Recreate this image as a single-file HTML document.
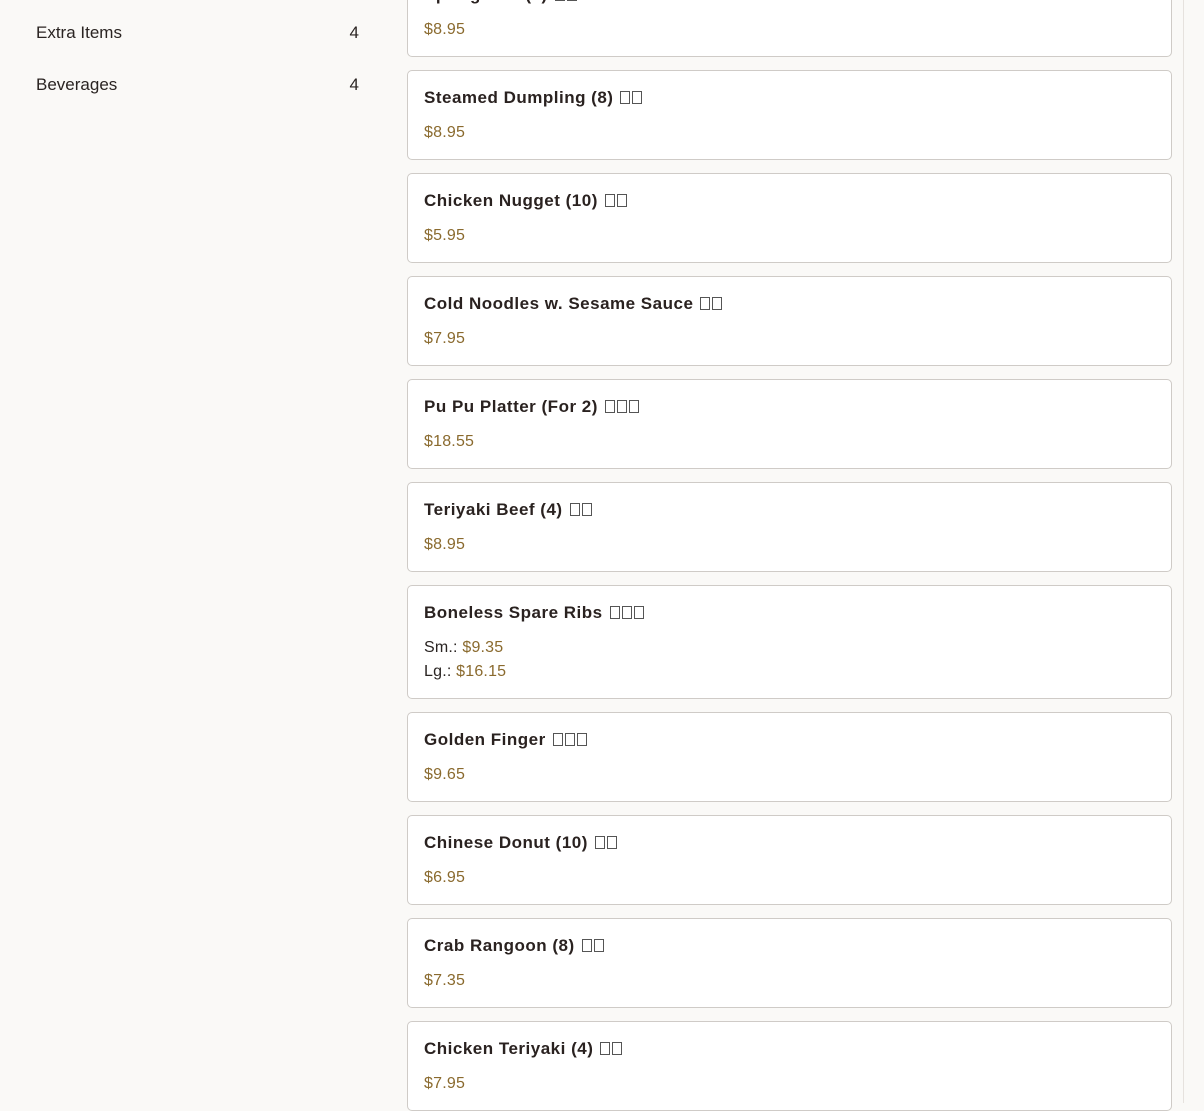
<!DOCTYPE html>
<html><head><meta charset="utf-8"><style>
body{margin:0;width:1204px;height:1103px;overflow:hidden;background:#faf9f7;font-family:"Liberation Sans",sans-serif;position:relative}
.side{position:absolute;left:36px;width:323px;font-size:17px;color:#2a2422}
.side span{float:right}
.vl{position:absolute;left:1183px;top:0;width:1px;height:1103px;background:#e6e2de}
.card{position:absolute;left:407px;width:763px;height:88px;background:#fff;border:1px solid #cfcbc7;border-radius:5px}
.t{position:absolute;left:16px;top:17px;font-size:17px;font-weight:bold;color:#2a2220;white-space:nowrap;letter-spacing:0.5px}
.p{position:absolute;left:16px;top:53px;font-size:16px;color:#8a6a2e;letter-spacing:0.2px}
.q{color:#2a2422}
.b{display:inline-block;width:10px;height:13px;border:1px solid #555;box-sizing:border-box;margin-left:2px;vertical-align:-1px}
.b:first-child{margin-left:7px}
</style></head><body>
<div class="side" style="top:23px">Extra Items<span>4</span></div>
<div class="side" style="top:75px">Beverages<span>4</span></div>
<div class="vl"></div>

<div class="card" style="top:-33px"><div class="t">Spring Roll (4)<i class="b"></i><i class="b"></i></div><div class="p">$8.95</div></div>
<div class="card" style="top:70px"><div class="t">Steamed Dumpling (8)<i class="b"></i><i class="b"></i></div><div class="p">$8.95</div></div>
<div class="card" style="top:173px"><div class="t">Chicken Nugget (10)<i class="b"></i><i class="b"></i></div><div class="p">$5.95</div></div>
<div class="card" style="top:276px"><div class="t">Cold Noodles w. Sesame Sauce<i class="b"></i><i class="b"></i></div><div class="p">$7.95</div></div>
<div class="card" style="top:379px"><div class="t">Pu Pu Platter (For 2)<i class="b"></i><i class="b"></i><i class="b"></i></div><div class="p">$18.55</div></div>
<div class="card" style="top:482px"><div class="t">Teriyaki Beef (4)<i class="b"></i><i class="b"></i></div><div class="p">$8.95</div></div>
<div class="card" style="top:585px;height:112px"><div class="t">Boneless Spare Ribs<i class="b"></i><i class="b"></i><i class="b"></i></div><div class="p" style="line-height:24px;top:50px"><span class="q">Sm.: </span>$9.35<br><span class="q">Lg.: </span>$16.15</div></div>
<div class="card" style="top:712px"><div class="t">Golden Finger<i class="b"></i><i class="b"></i><i class="b"></i></div><div class="p">$9.65</div></div>
<div class="card" style="top:815px"><div class="t">Chinese Donut (10)<i class="b"></i><i class="b"></i></div><div class="p">$6.95</div></div>
<div class="card" style="top:918px"><div class="t">Crab Rangoon (8)<i class="b"></i><i class="b"></i></div><div class="p">$7.35</div></div>
<div class="card" style="top:1021px"><div class="t">Chicken Teriyaki (4)<i class="b"></i><i class="b"></i></div><div class="p">$7.95</div></div>
</body></html>
